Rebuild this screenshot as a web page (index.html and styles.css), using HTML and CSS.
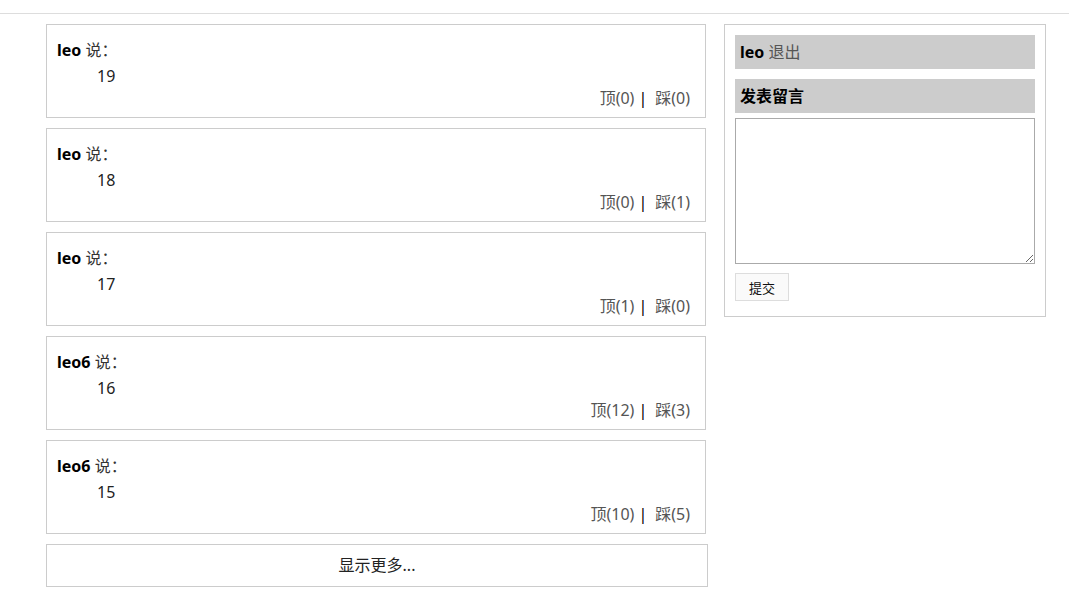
FILE: index.html
```html
<!DOCTYPE html>
<html lang="zh-CN">
<head>
    <meta charset="UTF-8">
    <title>留言板</title>
    <link rel="stylesheet" href="styles.css">
</head>
<body>
<div class="header"></div>
<div class="main">
    <div class="left">
        <div class="msg">
            <p class="who"><b>leo</b> 说：</p>
            <p class="content">19</p>
            <p class="votes"><a href="#">顶(0)</a><span class="sep">|</span><a href="#">踩(0)</a></p>
        </div>
        <div class="msg">
            <p class="who"><b>leo</b> 说：</p>
            <p class="content">18</p>
            <p class="votes"><a href="#">顶(0)</a><span class="sep">|</span><a href="#">踩(1)</a></p>
        </div>
        <div class="msg">
            <p class="who"><b>leo</b> 说：</p>
            <p class="content">17</p>
            <p class="votes"><a href="#">顶(1)</a><span class="sep">|</span><a href="#">踩(0)</a></p>
        </div>
        <div class="msg">
            <p class="who"><b>leo6</b> 说：</p>
            <p class="content">16</p>
            <p class="votes"><a href="#">顶(12)</a><span class="sep">|</span><a href="#">踩(3)</a></p>
        </div>
        <div class="msg">
            <p class="who"><b>leo6</b> 说：</p>
            <p class="content">15</p>
            <p class="votes"><a href="#">顶(10)</a><span class="sep">|</span><a href="#">踩(5)</a></p>
        </div>
        <a href="#" class="more">显示更多...</a>
    </div>
    <div class="side">
        <div class="bar"><b>leo</b> <a href="#">退出</a></div>
        <div class="bar"><b>发表留言</b></div>
        <textarea class="box"></textarea>
        <button class="submit">提交</button>
    </div>
</div>
</body>
</html>
```

FILE: styles.css
```css
body { margin: 0; font-family: "Noto Sans", "Noto Sans CJK SC", sans-serif; font-size: 16px; color: #222; background: #fff; }
a { color: #555; text-decoration: none; }
p { margin: 0; }
.header { height: 13px; border-bottom: 1px solid #ddd; }
.main { display: flex; align-items: flex-start; gap: 16px; margin: 10px 0 0 46px; }
.left { width: 662px; }
.msg { width: 638px; border: 1px solid #ccc; padding: 13px 10px 3px 10px; margin-bottom: 10px; height: 76px; }
.msg .who { line-height: 24px; color: #333; }
.msg .who b { color: #000; }
.msg .content { line-height: 28px; padding-left: 40px; }
.msg .votes { text-align: right; line-height: 16px; padding-right: 5px; color: #333; }
.msg .sep { margin: 0 8px 0 4px; color: #000; }
.more { display: block; height: 41px; line-height: 41px; border: 1px solid #ccc; text-align: center; color: #222; }
.side { width: 300px; border: 1px solid #ccc; padding: 10px 10px 15px 10px; }
.bar { background: #ccc; height: 34px; line-height: 34px; padding: 0 5px; margin-bottom: 10px; }
.bar b { color: #000; }
.bar + .bar { margin-bottom: 5px; }
.box { display: block; box-sizing: border-box; width: 300px; height: 146px; border: 1px solid #aaa; margin: 0 0 9px 0; }
.submit { width: 54px; height: 28px; border: 1px solid #ddd; background: #fafafa; font-family: inherit; font-size: 13px; color: #111; }
```
